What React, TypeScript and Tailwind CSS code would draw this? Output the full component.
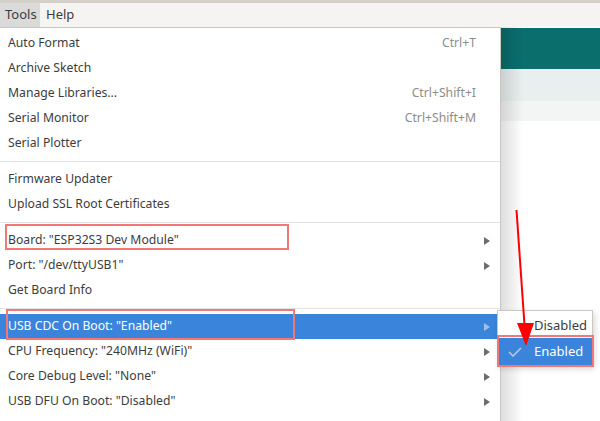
import React from "react";

type Item = { label: string; shortcut?: string; sub?: boolean; active?: boolean };

const groups: Item[][] = [
  [
    { label: "Auto Format", shortcut: "Ctrl+T" },
    { label: "Archive Sketch" },
    { label: "Manage Libraries...", shortcut: "Ctrl+Shift+I" },
    { label: "Serial Monitor", shortcut: "Ctrl+Shift+M" },
    { label: "Serial Plotter" },
  ],
  [{ label: "Firmware Updater" }, { label: "Upload SSL Root Certificates" }],
  [
    { label: 'Board: "ESP32S3 Dev Module"', sub: true },
    { label: 'Port: "/dev/ttyUSB1"', sub: true },
    { label: "Get Board Info" },
  ],
  [
    { label: 'USB CDC On Boot: "Enabled"', sub: true, active: true },
    { label: 'CPU Frequency: "240MHz (WiFi)"', sub: true },
    { label: 'Core Debug Level: "None"', sub: true },
    { label: 'USB DFU On Boot: "Disabled"', sub: true },
  ],
];

function Arrow({ light }: { light?: boolean }) {
  return (
    <svg width="6" height="8" viewBox="0 0 6 8" className="ml-auto">
      <path d="M0 0 L6 4 L0 8 Z" fill={light ? "#9fc0ec" : "#6a6e6e"} />
    </svg>
  );
}

function Row({ item }: { item: Item }) {
  return (
    <div
      className={
        "flex items-center h-[25px] pl-[8px] pr-[10px] " +
        (item.active ? "bg-[#3a84dc] text-white" : "text-[#3c3c3c]")
      }
    >
      <span>{item.label}</span>
      {item.shortcut && <span className="ml-auto mr-[14px] text-[#8c8c8c]">{item.shortcut}</span>}
      {item.sub && <Arrow light={item.active} />}
    </div>
  );
}

export default function App() {
  return (
    <div
      className="relative w-[600px] h-[421px] overflow-hidden bg-white text-[12.2px]"
      style={{ fontFamily: '"Noto Sans", "Open Sans", sans-serif' }}
    >
      {/* menubar */}
      <div className="h-[27px] border-t-[3px] border-[#d4cfc9] bg-[#f5f4f2] flex items-stretch text-[13px] text-[#3c3c3c]">
        <div className="w-[40px] bg-[#dadada] flex items-center pl-[5px]">Tools</div>
        <div className="flex items-center pl-[6px]">Help</div>
      </div>

      {/* app behind menu */}
      <div className="h-[41px] mt-[1px] bg-[#0a6e6c]" />
      <div className="h-[32px] bg-[#e9eeee]" />
      <div className="h-[20px] bg-[#f3f4f4]" />

      {/* dropdown shadow */}
      <div className="absolute left-[501px] top-[27px] w-[22px] h-[400px] bg-gradient-to-r from-[rgba(0,0,0,0.13)] to-transparent" />

      {/* dropdown */}
      <div className="absolute left-0 top-[27px] w-[501px] h-[400px] bg-white border-t border-r border-[#cbc6bf] pt-[3px]">
        {groups.map((g, i) => (
          <div key={i}>
            {i > 0 && <div className="my-[5px] h-px bg-[#e2e2e2]" />}
            {g.map((it) => (
              <Row key={it.label} item={it} />
            ))}
          </div>
        ))}
      </div>

      {/* red boxes */}
      <div className="absolute left-[5px] top-[224px] w-[284px] h-[26px] border-2 border-[#f27777]" />
      <div className="absolute left-[6px] top-[309px] w-[289px] h-[31px] border-2 border-[#f27777]" />

      {/* submenu */}
      <div className="absolute left-[497px] top-[310px] w-[96px] h-[56px] bg-white border border-[#cbc6bf] shadow-[2px_3px_6px_rgba(0,0,0,0.15)] pt-[3px] text-[13px]">
        <div className="h-[24px] flex items-center pl-[36px] text-[#3c3c3c]">Disabled</div>
        <div className="h-[27px] flex items-center bg-[#3a84dc] text-white">
          <svg width="14" height="10" viewBox="0 0 14 10" className="ml-[10px] mr-[12px]">
            <path d="M1 5 L5 9 L13 1" stroke="#b8c9dd" strokeWidth="1.6" fill="none" />
          </svg>
          <span>Enabled</span>
        </div>
      </div>
      <div className="absolute left-[497px] top-[335px] w-[97px] h-[32px] border-2 border-[#f27777]" />

      {/* red arrow */}
      <svg className="absolute left-0 top-0" width="600" height="421">
        <line x1="516.5" y1="210" x2="524.5" y2="325" stroke="#ff0000" strokeWidth="2" />
        <path d="M517 323 L534 323 L526 346 Z" fill="#ff0000" />
      </svg>
    </div>
  );
}
